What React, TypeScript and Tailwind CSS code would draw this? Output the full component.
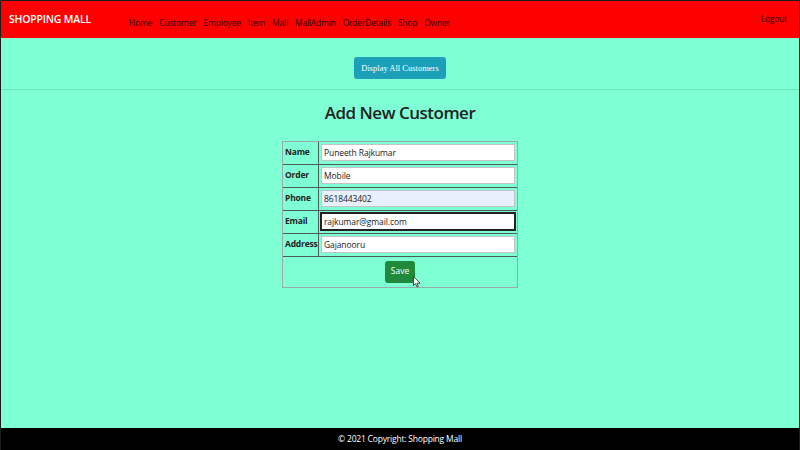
import { useState } from 'react';

const links = ['Home', 'Customer', 'Employee', 'Item', 'Mall', 'MallAdmin', 'OrderDetails', 'Shop', 'Owner'];

export default function App() {
  const [form, setForm] = useState({
    name: 'Puneeth Rajkumar',
    order: 'Mobile',
    phone: '8618443402',
    email: 'rajkumar@gmail.com',
    address: 'Gajanooru',
  });

  const rows: { key: keyof typeof form; label: string; extra: string }[] = [
    { key: 'name', label: 'Name', extra: 'bg-white border-[#c4c4c4]' },
    { key: 'order', label: 'Order', extra: 'bg-white border-[#c4c4c4]' },
    { key: 'phone', label: 'Phone', extra: 'bg-[#e8f0fe] border-[#c4c4c4]' },
    { key: 'email', label: 'Email', extra: 'bg-white border-[#222] ring-1 ring-[#222]' },
    { key: 'address', label: 'Address', extra: 'bg-white border-[#c4c4c4]' },
  ];

  return (
    <div className="flex h-[450px] w-[800px] flex-col overflow-hidden border-x border-t border-[#1c1c1c] bg-[#7fffd4] font-['Open_Sans',sans-serif]">
      {/* Navbar */}
      <nav className="flex h-[37px] shrink-0 items-center bg-[#ff0000] pl-[8px] pr-[12px]">
        <span className="text-[10.5px] font-semibold tracking-[-0.2px] text-white">SHOPPING MALL</span>
        <ul className="ml-[38px] flex items-center gap-[7px]">
          {links.map((l) => (
            <li key={l}>
              <a href="#" className="text-[8.5px] tracking-[-0.2px] text-[#2a0000]">
                {l}
              </a>
            </li>
          ))}
        </ul>
        <a href="#" className="ml-auto text-[8.5px] tracking-[-0.2px] text-[#2a0000]">
          Logout
        </a>
      </nav>

      <main className="relative flex-1">
        <div className="flex justify-center pt-[19px] pb-[10px]">
          <button className="h-[22px] rounded-[3px] bg-[#1ca0b9] px-[7px] font-['Liberation_Serif',serif] text-[8.5px] text-white">
            Display All Customers
          </button>
        </div>
        <hr className="border-t border-[#6fe5bf]" />

        <h2 className="mt-[10px] text-center text-[17px] font-semibold tracking-[-0.5px] text-[#222]">
          Add New Customer
        </h2>

        <div className="mt-[15px] flex justify-center">
          <table className="w-[236px] border border-[#9aa] text-[8.5px] text-[#222]" style={{ borderCollapse: 'separate', borderSpacing: 0 }}>
            <tbody>
              {rows.map((r) => (
                <tr key={r.key} className="h-[23px]">
                  <td className="w-[36px] border-b border-r border-b-[#4d5a55] border-r-[#4d5a55] pl-[2px] font-bold tracking-[-0.2px]">
                    {r.label}
                  </td>
                  <td className="border-b border-[#4d5a55] px-[2px]">
                    <input
                      value={form[r.key]}
                      onChange={(e) => setForm({ ...form, [r.key]: e.target.value })}
                      className={`h-[17px] w-full border px-[2px] text-[8.5px] tracking-[-0.1px] text-[#222] outline-none ${r.extra}`}
                    />
                  </td>
                </tr>
              ))}
              <tr className="h-[30px]">
                <td colSpan={2} className="text-center">
                  <button className="h-[22px] w-[30px] rounded-[3px] bg-[#1f8a3b] text-[8.5px] text-white">Save</button>
                </td>
              </tr>
            </tbody>
          </table>
        </div>

        {/* mouse pointer */}
        <svg className="absolute left-[412px] top-[238px] h-[12px] w-[8px]" viewBox="0 0 8 12">
          <path d="M0.5 0.5 L0.5 9.5 L2.6 7.6 L4 11 L5.4 10.4 L4 7.2 L7 7.2 Z" fill="white" stroke="#222" strokeWidth="0.8" />
        </svg>
      </main>

      <footer className="flex h-[22px] shrink-0 items-center justify-center bg-black text-[8.5px] tracking-[-0.2px] text-white">
        © 2021 Copyright: Shopping Mall
      </footer>
    </div>
  );
}
